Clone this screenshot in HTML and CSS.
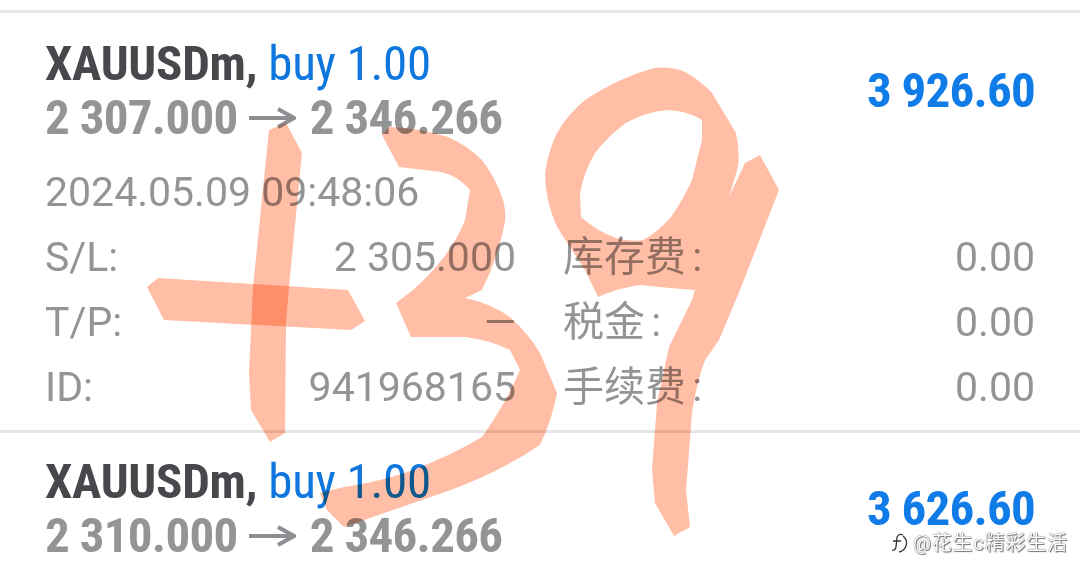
FILE: index.html
```html
<!DOCTYPE html>
<html>
  <head>
    <title>Positions</title>
    <link rel="stylesheet" href="styles.css">
  </head>
  <body>
    <div class="list">
      <div class="trade">
        <div class="head">
          <div>
            <div class="title">XAUUSDm, <span class="side">buy 1.00</span></div>
            <div class="prices">
              2 307.000
              <svg class="arrow" width="48" height="26" viewBox="0 0 48 26"><path d="M1 13H45M30 4L46 13L30 22" fill="none" stroke="#8e8f92" stroke-width="4"/></svg>
              2 346.266
            </div>
          </div>
          <div class="profit">3 926.60</div>
        </div>
        <div class="date">2024.05.09 09:48:06</div>
        <div class="details">
          <div class="row"><span>S/L:</span><span>2 305.000</span></div>
          <div class="row"><span class="cn">库存费 :</span><span>0.00</span></div>
          <div class="row"><span>T/P:</span><span>—</span></div>
          <div class="row"><span class="cn">税金 :</span><span>0.00</span></div>
          <div class="row"><span>ID:</span><span>941968165</span></div>
          <div class="row"><span class="cn">手续费 :</span><span>0.00</span></div>
        </div>
      </div>
      <div class="trade">
        <div class="head">
          <div>
            <div class="title">XAUUSDm, <span class="side">buy 1.00</span></div>
            <div class="prices">
              2 310.000
              <svg class="arrow" width="48" height="26" viewBox="0 0 48 26"><path d="M1 13H45M30 4L46 13L30 22" fill="none" stroke="#8e8f92" stroke-width="4"/></svg>
              2 346.266
            </div>
          </div>
          <div class="profit">3 626.60</div>
        </div>
      </div>
    </div>

    <!-- handwritten +39 on top of the screenshot -->
    <svg class="scribble" width="1080" height="580" viewBox="0 0 1080 580">
      <path d="M269 130L286 123L302 153L289 287L286 323L285 433L270 442L251 410L249 373L253 287Z"/>
      <path d="M147 287L158 278L348 290L365 321L351 330L164 320Z"/>
      <path d="M382 135L389 127Q420 128 448 137Q468 146 482 160Q496 178 503 200Q507 214 504 227Q496 262 482 290L465 298Q490 303 510 317Q528 333 540 353L557 393Q552 420 540 445Q500 472 448 491L344 527L327 510L320 493L344 487Q380 482 413 470Q450 456 482 437Q505 405 520 370L510 350Q490 340 465 337L411 337L396 303L413 290Q430 275 444 257Q458 238 465 220L470 190Q458 176 441 172L399 167Z"/>
      <path fill-rule="evenodd" d="M545 173Q548 152 557 133Q568 114 585 100Q618 78 654 68Q672 66 685 72Q700 80 712 93L736 133Q740 150 738 167L729 197L745 163L760 155L779 190L740 290L719 340L705 360Q696 385 692 413L686 490L690 527L674 536L655 503L652 470L657 403L669 347L692 300L695 290Q668 288 640 285Q618 288 598 297L585 270L557 227Q545 200 545 173ZM702 120Q685 110 667 110Q645 112 626 123Q608 136 595 153Q584 172 580 193L581 217Q598 232 616 238Q630 242 643 240Q658 232 671 217Q683 200 692 180L702 140Z"/>
    </svg>

    <div class="mark">
      <svg width="18" height="22" viewBox="0 0 18 22"><path d="M12 3Q8 1 6 5L5 15Q4 19 1 18M2 9H10M12 4Q17 8 15 14Q13 19 8 20" fill="none" stroke="#333" stroke-width="1.3"/></svg>
      <span>@花生c精彩生活</span>
    </div>
  </body>
</html>
```

FILE: styles.css
```css
html,
body {
  margin: 0;
  height: 580px;
  overflow: hidden;
  background: #fff;
}
body {
  font-family: Roboto, "Noto Sans CJK SC", sans-serif;
  color: #939496;
}
.list {
  padding-top: 10px;
}
.trade {
  border-top: 3px solid #e6e6e6;
  padding: 24px 45px 10px;
}
.trade + .trade {
  padding-top: 22px;
}
.head {
  display: flex;
  justify-content: space-between;
  align-items: center;
}
.title,
.prices {
  height: 54px;
  line-height: 54px;
  font-size: 49px;
  font-weight: 700;
  font-stretch: condensed;
  white-space: nowrap;
}
.title {
  color: #47474c;
  letter-spacing: -0.3px;
}
.prices {
  letter-spacing: -0.7px;
}
.side {
  color: #0e76dc;
  font-weight: 400;
}
.arrow {
  vertical-align: 3px;
  margin-right: 3px;
}
.profit {
  font-size: 49px;
  line-height: 44px;
  font-weight: 700;
  font-stretch: condensed;
  letter-spacing: -0.75px;
  color: #0f7ce8;
}
.date {
  margin-top: 15px;
  height: 65px;
  line-height: 65px;
  font-size: 41px;
}
.details {
  display: grid;
  grid-template-columns: 471px 470px;
  column-gap: 49px;
  grid-auto-rows: 65px;
}
.row {
  display: flex;
  justify-content: space-between;
  line-height: 65px;
  font-size: 41px;
}
.cn {
  margin-left: -2px;
  word-spacing: -4px;
}
.scribble {
  position: absolute;
  left: 0;
  top: 0;
  mix-blend-mode: multiply;
}
.scribble path {
  fill: #ffbea5;
  mix-blend-mode: multiply;
}
.mark {
  position: absolute;
  left: 891px;
  top: 532px;
  display: flex;
  align-items: center;
  gap: 4px;
  font-size: 20px;
  line-height: 22px;
  letter-spacing: 0.8px;
  color: #fff;
  text-shadow: 0 0 1px #333, 1px 1px 1px #777;
}
```
